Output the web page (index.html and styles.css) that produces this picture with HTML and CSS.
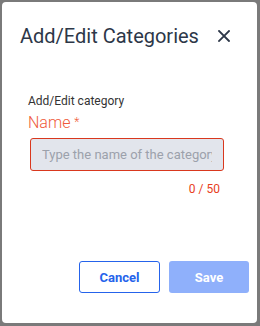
FILE: index.html
```html
<!DOCTYPE html>
<html>
<head>
<meta charset="utf-8">
<link rel="stylesheet" href="styles.css">
</head>
<body>
<div class="dialog">
  <div class="header">
    <h1 class="title">Add/Edit Categories</h1>
    <button class="close" aria-label="Close">
      <svg width="12" height="12" viewBox="0 0 12 12"><path d="M1 1L11 11M11 1L1 11" stroke="#2d3748" stroke-width="1.8" stroke-linecap="square"/></svg>
    </button>
  </div>
  <div class="content">
    <div class="section-label">Add/Edit category</div>
    <label class="field-label">Name <span class="req">*</span></label>
    <input class="field-input" type="text" placeholder="Type the name of the category">
    <div class="counter">0 / 50</div>
  </div>
  <div class="footer">
    <button class="btn btn-cancel">Cancel</button>
    <button class="btn btn-save">Save</button>
  </div>
</div>
</body>
</html>
```
FILE: styles.css
```css
html, body {
  margin: 0;
  padding: 0;
  background: #7a7a7a;
  width: 260px;
  height: 326px;
  overflow: hidden;
  font-family: Roboto, "Liberation Sans", sans-serif;
}
.dialog {
  box-sizing: border-box;
  margin: 2px 0 0 2px;
  width: 255px;
  height: 321px;
  background: #fff;
  border-radius: 4px;
  display: flex;
  flex-direction: column;
}
.header {
  display: flex;
  align-items: center;
  justify-content: space-between;
  padding: 22px 27px 0 18px;
  height: 24px;
}
.title {
  margin: 0;
  font-size: 20px;
  font-weight: 400;
  color: #2d3748;
  line-height: 24px;
}
.close {
  border: 0;
  background: none;
  padding: 0;
  width: 12px;
  height: 12px;
  display: flex;
}
.content {
  padding: 46px 34px 0 26px;
  display: flex;
  flex-direction: column;
}
.section-label {
  font-size: 12px;
  color: #333;
  line-height: 14px;
}
.field-label {
  font-size: 16px;
  font-weight: 300;
  color: #ef5a3a;
  line-height: 19px;
  margin-top: 5px;
}
.req {
  font-size: 12px;
  vertical-align: top;
}
.field-input {
  box-sizing: border-box;
  margin: 6px 0 0 2px;
  width: 194px;
  height: 33px;
  border: 1px solid #d9381e;
  border-radius: 3px;
  background: #e2e5ec;
  padding: 0 11px;
  font-family: Roboto, "Liberation Sans", sans-serif;
  font-size: 13px;
  color: #333;
  outline: none;
}
.field-input::placeholder { color: #9ca1ab; }
.counter {
  text-align: right;
  font-size: 12px;
  color: #e8401c;
  margin-top: 11px;
  padding-right: 3px;
  line-height: 14px;
}
.footer {
  margin-top: auto;
  display: flex;
  justify-content: flex-end;
  gap: 9px;
  padding: 0 8px 30px 0;
}
.btn {
  box-sizing: border-box;
  width: 81px;
  height: 32px;
  border-radius: 3px;
  font-family: Roboto, "Liberation Sans", sans-serif;
  font-weight: 700;
  font-size: 13px;
}
.btn-cancel {
  background: #fff;
  border: 1px solid #2563eb;
  color: #2563eb;
}
.btn-save {
  width: 80px;
  background: #8fb0fb;
  border: 0;
  color: #fff;
}
```
